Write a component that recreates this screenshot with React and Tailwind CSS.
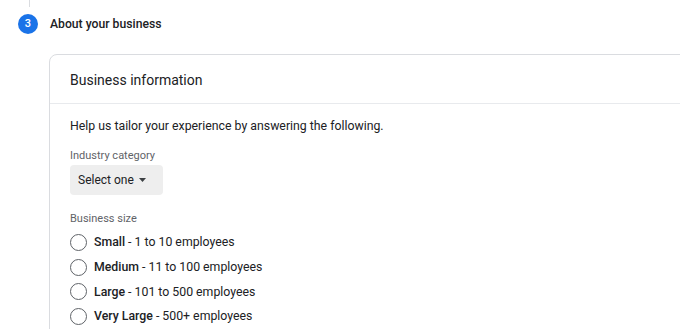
export default function App() {
  const sizes = [
    { name: 'Small', desc: '1 to 10 employees' },
    { name: 'Medium', desc: '11 to 100 employees' },
    { name: 'Large', desc: '101 to 500 employees' },
    { name: 'Very Large', desc: '500+ employees' },
  ]

  return (
    <div className="w-[680px] h-[329px] overflow-hidden bg-white font-['Roboto',sans-serif] text-[#202124]">
      {/* step connector */}
      <div className="ml-[29px] w-px h-[7px] bg-[#dadce0]" />

      {/* step header */}
      <div className="flex items-center mt-[7px] ml-[18px] h-5">
        <div className="w-5 h-5 rounded-full bg-[#1a73e8] text-white text-[11px] font-medium flex items-center justify-center">
          3
        </div>
        <span className="ml-3 text-[12.2px] font-medium leading-5">About your business</span>
      </div>

      {/* card */}
      <div className="mt-[20px] ml-[49px] w-[700px] border border-[#dadce0] rounded-tl-lg">
        <div className="h-[49px] px-5 flex items-center text-[14px] pt-[2px] border-b border-[#e8eaed]">
          Business information
        </div>

        <div className="px-5 pt-3 pb-6">
          <p className="text-[12.3px] leading-5">Help us tailor your experience by answering the following.</p>

          <p className="mt-[12px] text-[11px] leading-4 text-[#5f6368]">Industry category</p>
          <button className="mt-[1px] w-[93px] h-[30px] rounded bg-[#eeeeee] flex items-center pl-2 text-[12px] text-[#202124]">
            Select one
            <svg width="7" height="4" viewBox="0 0 7 4" className="ml-[5px]">
              <path d="M0 0h7L3.5 4z" fill="#3c4043" />
            </svg>
          </button>

          <p className="mt-[16px] text-[11px] leading-4 text-[#5f6368]">Business size</p>
          <div className="mt-[3px] flex flex-col">
            {sizes.map(s => (
              <label key={s.name} className="h-[24.7px] flex items-center">
                <span className="w-[17px] h-[17px] rounded-full border-[1.5px] border-[#5f6368]" />
                <span className="ml-[7px] text-[12.3px] leading-5">
                  <span className="font-medium">{s.name}</span> - {s.desc}
                </span>
              </label>
            ))}
          </div>
        </div>
      </div>
    </div>
  )
}
